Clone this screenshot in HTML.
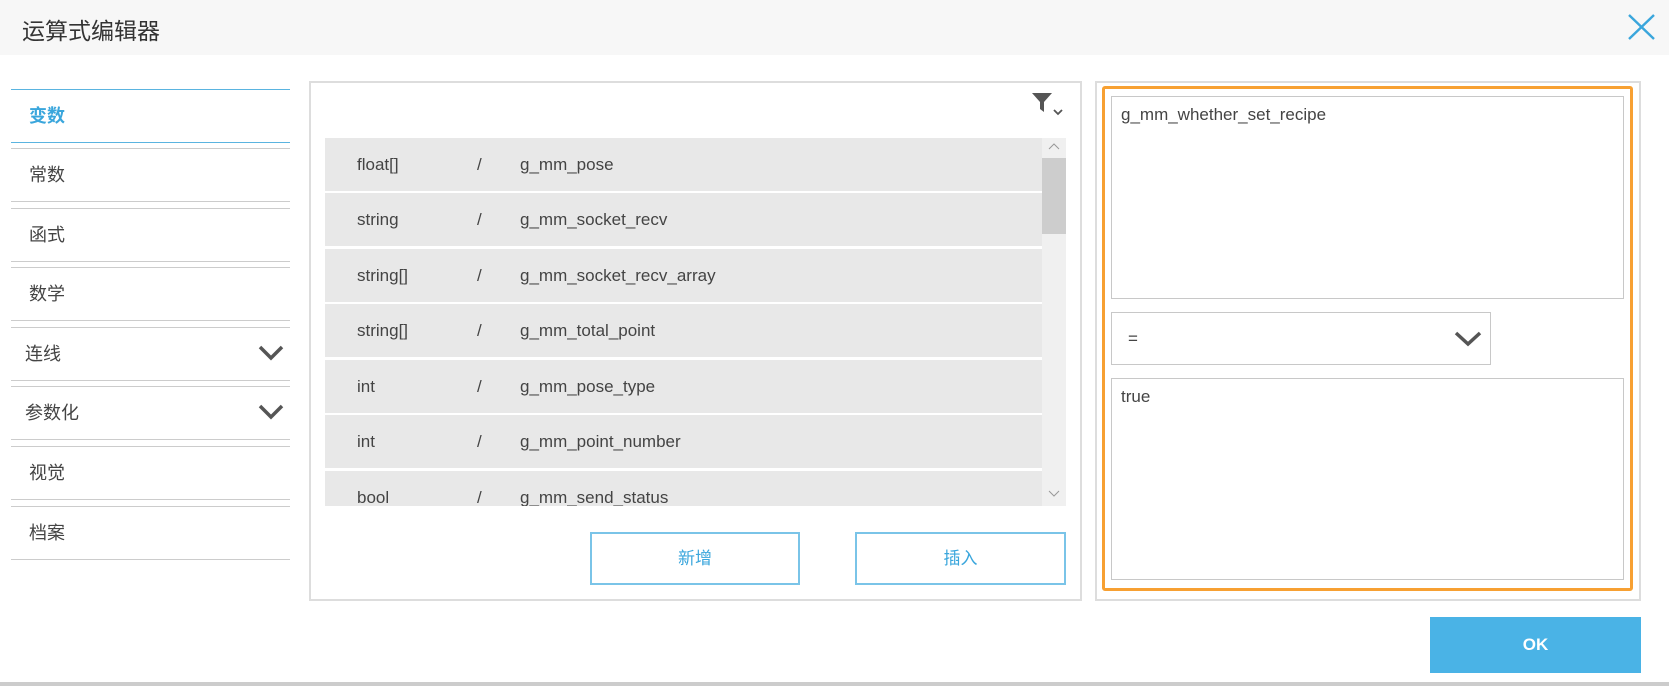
<!DOCTYPE html>
<html><head><meta charset="utf-8"><style>
*{box-sizing:border-box;margin:0;padding:0}
body{width:1669px;height:686px;background:#fff;position:relative;overflow:hidden;font-family:"Liberation Sans","Noto Sans CJK SC",sans-serif;color:#444}
.a{position:absolute}
.hdr{left:0;top:0;width:1669px;height:55px;background:#f7f7f7}
.title{left:22px;top:12px;font-size:23px;color:#333}
.nav{left:11px;width:279px;height:54px;border-top:1px solid #ccc;border-bottom:1px solid #ccc;font-size:18px;line-height:52px;padding-left:18px;color:#444}
.nav.on{border-color:#5ab4e0;color:#3aa6dc;font-weight:bold}
.chev{position:absolute;right:6px;top:17px}
.panel{border:2px solid #ddd}
.row{left:325px;width:717px;height:53px;background:#e8e8e8;font-size:17px;line-height:53px;color:#444}
.row span{position:absolute}
.btn{border:2px solid #7ac4e8;color:#3aa6dc;font-size:17px;text-align:center;line-height:50px}
.box{border:1px solid #c8c8c8;background:#fff;font-size:17px;padding:8px 9px}
</style></head><body>
<div class="a hdr"></div>
<div class="a title">运算式编辑器</div>
<svg class="a" style="left:1627px;top:14px" width="29" height="26" viewBox="0 0 29 26"><path d="M2 1L27 25M27 1L2 25" stroke="#3aa6dc" stroke-width="2.4" fill="none"/></svg>

<div class="a nav on" style="top:89px">变数</div>
<div class="a nav" style="top:148px">常数</div>
<div class="a nav" style="top:208px">函式</div>
<div class="a nav" style="top:267px">数学</div>
<div class="a nav" style="top:327px;padding-left:14px">连线<svg class="chev" width="26" height="16" viewBox="0 0 26 16"><path d="M2 2L13 13L24 2" stroke="#555" stroke-width="3.5" fill="none"/></svg></div>
<div class="a nav" style="top:386px;padding-left:14px">参数化<svg class="chev" width="26" height="16" viewBox="0 0 26 16"><path d="M2 2L13 13L24 2" stroke="#555" stroke-width="3.5" fill="none"/></svg></div>
<div class="a nav" style="top:446px">视觉</div>
<div class="a nav" style="top:506px">档案</div>

<div class="a panel" style="left:309px;top:81px;width:773px;height:520px"></div>
<svg class="a" style="left:1031px;top:91px" width="34" height="28" viewBox="0 0 34 28"><path d="M1 2H21L13 11V21L9 18V11Z" fill="#555"/><path d="M23 19L27 23L31 19" stroke="#555" stroke-width="1.8" fill="none"/></svg>
<div class="a" style="left:1042px;top:138px;width:24px;height:368px;background:#f0f0f0"></div>
<div class="a" style="left:1042px;top:158px;width:24px;height:76px;background:#cdcdcd"></div>
<svg class="a" style="left:1048px;top:142px" width="12" height="8"><path d="M1 7L6 2L11 7" stroke="#999" fill="none"/></svg>
<svg class="a" style="left:1048px;top:490px" width="12" height="8"><path d="M1 1L6 6L11 1" stroke="#999" fill="none"/></svg>
<div class="a" style="left:325px;top:138px;width:717px;height:368px;overflow:hidden">
<div class="a row" style="left:0;top:0"><span style="left:32px">float[]</span><span style="left:152px">/</span><span style="left:195px">g_mm_pose</span></div>
<div class="a row" style="left:0;top:55px"><span style="left:32px">string</span><span style="left:152px">/</span><span style="left:195px">g_mm_socket_recv</span></div>
<div class="a row" style="left:0;top:111px"><span style="left:32px">string[]</span><span style="left:152px">/</span><span style="left:195px">g_mm_socket_recv_array</span></div>
<div class="a row" style="left:0;top:166px"><span style="left:32px">string[]</span><span style="left:152px">/</span><span style="left:195px">g_mm_total_point</span></div>
<div class="a row" style="left:0;top:222px"><span style="left:32px">int</span><span style="left:152px">/</span><span style="left:195px">g_mm_pose_type</span></div>
<div class="a row" style="left:0;top:277px"><span style="left:32px">int</span><span style="left:152px">/</span><span style="left:195px">g_mm_point_number</span></div>
<div class="a row" style="left:0;top:333px"><span style="left:32px">bool</span><span style="left:152px">/</span><span style="left:195px">g_mm_send_status</span></div>
</div>
<div class="a btn" style="left:590px;top:532px;width:210px;height:53px">新增</div>
<div class="a btn" style="left:855px;top:532px;width:211px;height:53px">插入</div>

<div class="a panel" style="left:1095px;top:81px;width:546px;height:520px"></div>
<div class="a" style="left:1102px;top:86px;width:531px;height:505px;border:3px solid #f7a032;border-radius:3px"></div>
<div class="a box" style="left:1111px;top:96px;width:513px;height:203px">g_mm_whether_set_recipe</div>
<div class="a box" style="left:1111px;top:312px;width:380px;height:53px;line-height:35px;padding-left:16px">=<svg style="position:absolute;right:8px;top:18px" width="28" height="16" viewBox="0 0 28 16"><path d="M2 2L14 13L26 2" stroke="#555" stroke-width="3.5" fill="none"/></svg></div>
<div class="a box" style="left:1111px;top:378px;width:513px;height:202px">true</div>

<div class="a" style="left:1430px;top:617px;width:211px;height:56px;background:#4ab3e6;color:#fff;font-weight:bold;font-size:17px;text-align:center;line-height:56px">OK</div>
<div class="a" style="left:0;top:682px;width:1669px;height:4px;background:#ccc"></div>
</body></html>
